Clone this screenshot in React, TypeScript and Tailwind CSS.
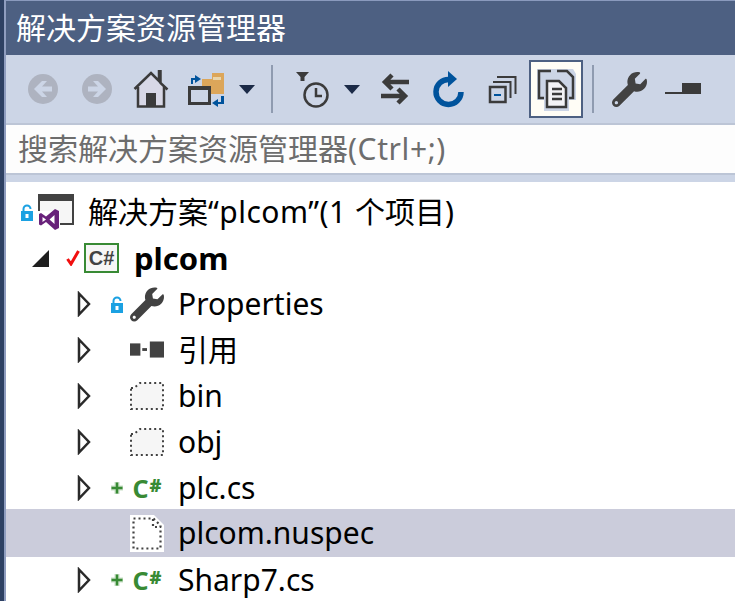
import type { ReactNode } from "react";
import { FaWrench } from "react-icons/fa";

const FONT = "font-['Noto_Sans','Noto_Sans_CJK_SC',sans-serif]";

function Back({ flip }: { flip?: boolean }) {
  return (
    <svg width="32" height="32" viewBox="0 0 32 32" className={flip ? "-scale-x-100" : ""}>
      <circle cx="16" cy="16" r="15" fill="#aeb3c0" />
      <path d="M7 16l8-8h5l-5 5.500h10v5H15l5 5.500h-5z" fill="#ccd5e6" />
    </svg>
  );
}

function Home() {
  return (
    <svg width="36" height="38" viewBox="0 0 36 38">
      <path d="M5 18L18 5l13 13v18H5z" fill="#d8d8e6" />
      <path d="M1.500 19L18 3l8 8V1h1.500v12l7 6.500M5 17v19.500h26V17" fill="none" stroke="#3b3b3b" strokeWidth="2.500" />
      <rect x="13" y="23" width="10" height="13" fill="#3b3b3b" />
    </svg>
  );
}

function SyncIcon() {
  return (
    <svg width="38" height="36" viewBox="0 0 38 36" className="ml-[2px]">
      <path d="M15 8h10V2h12v21H15z" fill="#dca65a" />
      <rect x="26" y="6" width="8" height="3" fill="#e9d5ab" />
      <rect x="2.500" y="16.500" width="20" height="16" fill="#ccd5e6" stroke="#3b3b3b" strokeWidth="3" />
      <rect x="1" y="15" width="23" height="4" fill="#3b3b3b" />
      <path d="M4 13V7h4V4l6 4-6 4V9H6v4z" fill="#00539c" />
      <path d="M37 25v8h-6v3l-6-4 6-4v3h3v-6z" fill="#00539c" />
    </svg>
  );
}

function Caret() {
  return (
    <svg width="16" height="9" viewBox="0 0 16 9">
      <path d="M0 0h16L8 9z" fill="#1b2a47" />
    </svg>
  );
}

function ClockFilter() {
  return (
    <svg width="36" height="40" viewBox="0 0 36 40">
      <path d="M0 3h13L8.500 8v4h-4V8z" fill="#3b3b3b" />
      <circle cx="20" cy="26" r="11.500" fill="none" stroke="#3b3b3b" strokeWidth="2.500" />
      <path d="M20 19v8h6" fill="none" stroke="#3b3b3b" strokeWidth="2.500" />
    </svg>
  );
}

function Swap() {
  return (
    <svg width="30" height="32" viewBox="0 0 30 32">
      <path d="M29 9H6M12 2L5 9l7 7M1 23h24M18 16l7 7-7 7" fill="none" stroke="#3b3b3b" strokeWidth="4.500" />
    </svg>
  );
}

function Refresh() {
  return (
    <svg width="32" height="38" viewBox="0 0 32 38">
      <path d="M17 9.500A12.500 12.500 0 1 0 29 22" fill="none" stroke="#00539c" strokeWidth="5.500" />
      <path d="M16 1l9 8-9 8z" fill="#00539c" />
    </svg>
  );
}

function CollapseAll() {
  return (
    <svg width="29" height="29" viewBox="0 0 29 29">
      <path d="M9 2H27.500V19" fill="none" stroke="#3b3b3b" strokeWidth="2" />
      <path d="M5 7H22.500V23" fill="none" stroke="#3b3b3b" strokeWidth="2" />
      <rect x="2" y="12" width="15.500" height="15" fill="#ccd5e6" stroke="#3b3b3b" strokeWidth="2.500" />
      <rect x="6" y="19" width="7" height="2" fill="#00539c" />
    </svg>
  );
}

function CopyDocs() {
  return (
    <svg width="40" height="44" viewBox="0 0 40 44">
      <path d="M1 2h36l3 5v26H1z" fill="#ccd5e6" />
      <path d="M8 31H3V4h12M21 4h10l6 6v21h-5" fill="none" stroke="#3b3b3b" strokeWidth="2.500" />
      <path d="M8 12h16l9 8v24H8z" fill="#ccd5e6" />
      <path d="M11 14h12l7 7v19H11z" fill="#f3f3f6" stroke="#3b3b3b" strokeWidth="2.500" />
      <path d="M16 22h10M16 27h10M16 32h10" stroke="#3b3b3b" strokeWidth="2.500" />
    </svg>
  );
}

function MinusPin() {
  return (
    <svg width="36" height="12" viewBox="0 0 36 12">
      <rect x="0" y="9" width="18" height="2" fill="#3b3b3b" />
      <rect x="17" y="0" width="19" height="11" fill="#3b3b3b" />
    </svg>
  );
}

function ToolButton({ children, active }: { children: ReactNode; active?: boolean }) {
  return (
    <div
      className={`flex h-[58px] w-[54px] items-center justify-center ${
        active ? "border-2 border-[#4d6082] bg-[#fffdf6]" : ""
      }`}
    >
      {children}
    </div>
  );
}

function Separator() {
  return <div className="mx-[9px] h-[48px] w-[2px] bg-[#8f9bb0]" />;
}

function Lock() {
  return (
    <svg width="14" height="17" viewBox="0 0 14 17">
      <path d="M3.500 8V5a3.500 3.500 0 0 1 7 0" fill="none" stroke="#1ba1e2" strokeWidth="2" />
      <path d="M1 7h12v10H1z" fill="#1ba1e2" />
      <rect x="5.500" y="10" width="3" height="4" fill="#fff" />
    </svg>
  );
}

function SolutionIcon() {
  return (
    <svg width="36" height="36" viewBox="0 0 36 36">
      <rect x="1" y="1" width="34" height="29" fill="#f6f6f6" stroke="#424242" strokeWidth="2" />
      <rect x="0" y="0" width="36" height="7" fill="#424242" />
      <path d="M0 17h22v19H0z" fill="#fff" />
      <path d="M1 20l2-1 5 3.500L17 15l4 2v17l-4 2-9-8-5 3.500-2-1zM4.500 23v5L8 25.500zM16.500 21l-5 4.500 5 4.500z" fill="#68217a" fillRule="evenodd" />
    </svg>
  );
}

function Arrow({ open }: { open?: boolean }) {
  if (open) {
    return (
      <svg width="17" height="17" viewBox="0 0 17 17">
        <path d="M17 0v17H0z" fill="#1e1e1e" />
      </svg>
    );
  }
  return (
    <svg width="14" height="26" viewBox="0 0 14 26">
      <path d="M2 2.500L12 13 2 23.500z" fill="#fff" stroke="#2a2a2a" strokeWidth="2.500" />
    </svg>
  );
}

function Check() {
  return (
    <svg width="14" height="16" viewBox="0 0 14 16">
      <path d="M1.500 9l3.500 5L12.500 1" fill="none" stroke="#f10f0f" strokeWidth="3" />
    </svg>
  );
}

function Plus() {
  return (
    <svg width="16" height="16" viewBox="0 0 16 16">
      <path d="M8 2v12M2 8h12" stroke="#c8dfc6" strokeWidth="5" />
      <path d="M8 2.500v11M2.500 8h11" stroke="#388a34" strokeWidth="2.500" />
    </svg>
  );
}

function CsBox() {
  return (
    <div className="flex h-[30px] w-[35px] items-center justify-center border-2 border-[#388a34] bg-[#f6f6f6] font-['Liberation_Sans',sans-serif] text-[20px] leading-none font-bold text-[#424242]">
      C#
    </div>
  );
}

function CsFile() {
  return (
    <div className="flex w-[34px] items-start justify-center font-['Noto_Sans',sans-serif] text-[25px] leading-none font-bold text-[#388a34]">
      C<span className="ml-[1px] text-[18px] leading-none font-black">#</span>
    </div>
  );
}

function Wrench() {
  return <FaWrench size={35} color="#424242" />;
}

function RefIcon() {
  return (
    <svg width="36" height="18" viewBox="0 0 36 18">
      <rect x="0" y="2" width="11" height="13" fill="#424242" />
      <rect x="13" y="7" width="5" height="3" fill="#424242" />
      <rect x="21" y="0" width="15" height="17" fill="#424242" />
    </svg>
  );
}

function DottedFolder() {
  return (
    <svg width="34" height="28" viewBox="0 0 34 28">
      <path d="M1 6h3l6-5h23v26H1z" fill="#f6f6f6" stroke="#424242" strokeWidth="2" strokeDasharray="2 3" />
    </svg>
  );
}

function DottedFile() {
  return (
    <svg width="34" height="37" viewBox="0 0 34 37">
      <path d="M0 0h24l10 10v27H0z" fill="#fff" />
      <path d="M3.500 3.500h20l7 7v23h-27zM23 4v8h8" fill="#fff" stroke="#424242" strokeWidth="2.200" strokeDasharray="2 3" />
    </svg>
  );
}

// child rows share the same columns: arrow, status, icon, label
function ChildRow({ arrow = true, status, icon, label, selected }: { arrow?: boolean; status?: ReactNode; icon: ReactNode; label: string; selected?: boolean }) {
  return (
    <div className={`flex items-center pl-[61px] ${selected ? "-mt-[2px] h-[48px] bg-[#cbccdb]" : "h-[46px]"}`}>
      <div className="flex w-[34px] justify-center">{arrow ? <Arrow /> : null}</div>
      <div className="flex w-[29px] justify-center pl-[3px]">{status}</div>
      <div className="flex w-[34px] justify-center">{icon}</div>
      <span className="ml-[14px] text-[30px] leading-none text-black">{label}</span>
    </div>
  );
}

export default function App() {
  return (
    <div className={`flex h-[601px] w-[735px] overflow-hidden bg-[#ccd5e6] ${FONT}`}>
      <div className="w-[4px] shrink-0 bg-[#2e4163]" />
      <div className="w-[2px] shrink-0 bg-[#8f9dbf]" />
      <div className="flex min-w-0 flex-1 flex-col">
        <div className="flex h-[55px] shrink-0 items-center border-t border-[#8a9abd] bg-[#4d6082] pl-[10px] text-[30px] leading-none text-white">
          解决方案资源管理器
        </div>

        {/* Toolbar */}
        <div className="flex h-[68px] shrink-0 items-center pl-[10px]">
          <ToolButton><Back /></ToolButton>
          <ToolButton><Back flip /></ToolButton>
          <ToolButton><Home /></ToolButton>
          <ToolButton><SyncIcon /></ToolButton>
          <div className="flex w-[30px] justify-center"><Caret /></div>
          <Separator />
          <div className="flex w-[58px] justify-center pl-[6px]"><ClockFilter /></div>
          <div className="flex w-[24px] justify-center"><Caret /></div>
          <div className="mr-[5px] ml-[10px] flex w-[42px] justify-center"><Swap /></div>
          <ToolButton><Refresh /></ToolButton>
          <ToolButton><CollapseAll /></ToolButton>
          <ToolButton active><CopyDocs /></ToolButton>
          <Separator />
          <div className="-ml-[1px]"><ToolButton><Wrench /></ToolButton></div>
          <ToolButton><MinusPin /></ToolButton>
        </div>

        {/* Search */}
        <div className="flex h-[52px] shrink-0 items-center border-y-2 border-[#bcc5d6] bg-[#fdfdfd] pl-[12px] text-[30px] leading-none text-[#6d6d6d]">
          搜索解决方案资源管理器<span className="tracking-[0.6px]">(Ctrl+;)</span>
        </div>
        <div className="h-[7px] shrink-0" />

        {/* Tree */}
        <div className="flex-1 bg-white pt-[7px]">
          <div className="flex h-[46px] items-center pl-[14px]">
            <Lock />
            <div className="ml-[4px]"><SolutionIcon /></div>
            <span className="ml-[14px] text-[30px] leading-none text-black">
              解决方案<span className="tracking-[0.5px]">“plcom”(1 </span>个项目<span>)</span>
            </span>
          </div>
          <div className="flex h-[46px] items-center pl-[26px]">
            <Arrow open />
            <div className="ml-[17px]"><Check /></div>
            <div className="ml-[4px]"><CsBox /></div>
            <span className="ml-[15px] text-[31px] leading-none font-bold text-black">plcom</span>
          </div>
          <ChildRow status={<Lock />} icon={<Wrench />} label="Properties" />
          <ChildRow icon={<RefIcon />} label="引用" />
          <ChildRow icon={<DottedFolder />} label="bin" />
          <ChildRow icon={<DottedFolder />} label="obj" />
          <ChildRow status={<Plus />} icon={<CsFile />} label="plc.cs" />
          <ChildRow arrow={false} icon={<DottedFile />} label="plcom.nuspec" selected />
          <ChildRow status={<Plus />} icon={<CsFile />} label="Sharp7.cs" />
        </div>
      </div>
    </div>
  );
}
